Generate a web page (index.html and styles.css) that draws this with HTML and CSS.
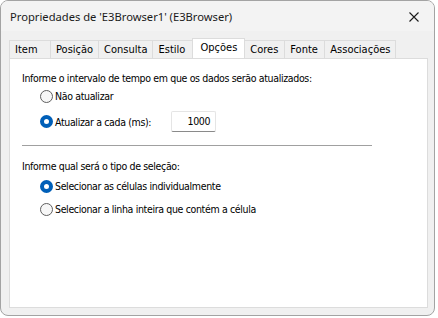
FILE: index.html
```html
<!DOCTYPE html>
<html lang="pt">
<head>
    <meta charset="UTF-8">
    <title>Propriedades de 'E3Browser1' (E3Browser)</title>
    <link rel="stylesheet" href="styles.css">
</head>
<body>

<div class="window">
    <div class="titlebar">
        <span class="title">Propriedades de 'E3Browser1' (E3Browser)</span>
        <svg class="close" width="10" height="10" viewBox="0 0 10 10">
            <path d="M0.5 0.5 L9.5 9.5 M9.5 0.5 L0.5 9.5" stroke="#1a1a1a" stroke-width="1.1" fill="none"/>
        </svg>
    </div>

    <div class="tabs">
        <div class="tab">Item</div>
        <div class="tab">Posição</div>
        <div class="tab">Consulta</div>
        <div class="tab">Estilo</div>
        <div class="tab active">Opções</div>
        <div class="tab">Cores</div>
        <div class="tab">Fonte</div>
        <div class="tab">Associações</div>
    </div>

    <div class="panel">
        <p class="label">Informe o intervalo de tempo em que os dados serão atualizados:</p>
        <div class="option">
            <span class="radio"></span>Não atualizar
        </div>
        <div class="option option-input">
            <span class="radio checked"></span>Atualizar a cada (ms):
            <span class="textbox">1000</span>
        </div>

        <hr class="separator">

        <p class="label">Informe qual será o tipo de seleção:</p>
        <div class="option">
            <span class="radio checked"></span>Selecionar as células individualmente
        </div>
        <div class="option">
            <span class="radio"></span>Selecionar a linha inteira que contém a célula
        </div>
    </div>
</div>

</body>
</html>
```

FILE: styles.css
```css
body {
    margin: 0;
    background-color: #fff;
    font-family: "DejaVu Sans Condensed", "DejaVu Sans", sans-serif;
    font-size: 11px;
    color: #000;
}
.window {
    width: 435px;
    height: 316px;
    box-sizing: border-box;
    border: 1px solid #a3a3a3;
    border-radius: 8px;
    background-color: #f0f0f0;
    overflow: hidden;
}
.titlebar {
    height: 30px;
    display: flex;
    align-items: center;
    justify-content: space-between;
    padding: 0 15px 0 9px;
    background-color: #f3f3f3;
}
.title {
    font-family: "Noto Sans", sans-serif;
    font-size: 11.2px;
    color: #1a1a1a;
}
.close {
    margin-top: 1px;
}
.tabs {
    display: flex;
    align-items: flex-end;
    height: 20px;
    margin: 7px 0 0 8px;
    position: relative;
    z-index: 1;
}
.tab {
    min-width: 40px;
    box-sizing: border-box;
    height: 18px;
    line-height: 18px;
    padding: 0 5px;
    border: 1px solid #dcdcdc;
    border-bottom: none;
    border-left: none;
    background-color: #f0f0f0;
    white-space: nowrap;
}
.tab:first-child {
    min-width: 42px;
    border-left: 1px solid #dcdcdc;
}
.tab.active {
    height: 20px;
    line-height: 17px;
    background-color: #fff;
    border-left: 1px solid #dcdcdc;
    margin-left: -1px;
    padding: 0 7px;
}
.panel {
    height: 248px;
    margin: 0 6px 0 8px;
    border: 1px solid #dcdcdc;
    background-color: #fff;
    padding: 0 12px;
    font-size: 10.5px;
    letter-spacing: -0.35px;
}
.label {
    margin: 11px 0 0 0;
    line-height: 16px;
}
.option {
    display: flex;
    align-items: center;
    height: 16px;
    margin: 2px 0 0 18px;
}
.option + .option {
    margin-top: 7px;
}
.option-input {
    height: 21px;
}
.separator + .label + .option {
    margin-top: 4px;
}
.radio {
    width: 11px;
    height: 11px;
    border: 1px solid #5f5f5f;
    border-radius: 50%;
    background-color: #f7f7f7;
    margin-right: 2px;
    box-sizing: content-box;
}
.radio.checked {
    width: 5px;
    height: 5px;
    border: 4px solid #005fb8;
    background-color: #fff;
}
.textbox {
    width: 38px;
    height: 19px;
    line-height: 18px;
    margin-left: 20px;
    padding-right: 5px;
    text-align: right;
    border: 1px solid #e5e5e5;
    border-bottom-color: #8a8a8a;
    border-radius: 2px;
    background-color: #fff;
}
.separator {
    width: 350px;
    margin: 13px 0 0 0;
    border: none;
    border-top: 1px solid #a0a0a0;
}
.separator + .label {
    margin-top: 12px;
}
```
